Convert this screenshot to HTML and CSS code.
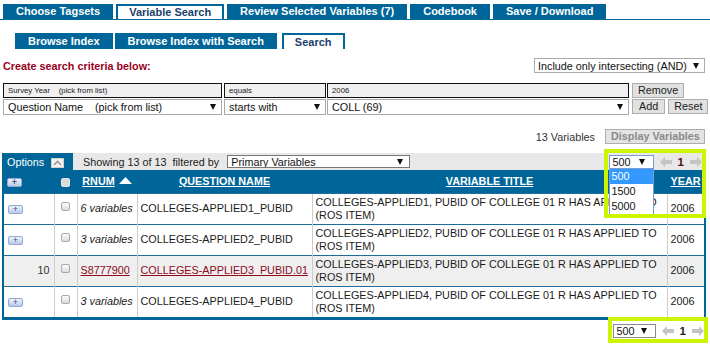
FILE: index.html
```html
<!DOCTYPE html>
<html>
<head>
<meta charset="utf-8">
<link rel="stylesheet" href="styles.css">
</head>
<body>
<div class="tabs">
  <div class="tab">Choose Tagsets</div>
  <div class="tab active">Variable Search</div>
  <div class="tab">Review Selected Variables (7)</div>
  <div class="tab">Codebook</div>
  <div class="tab">Save / Download</div>
</div>
<div class="subtabs">
  <div class="subtab">Browse Index</div>
  <div class="subtab">Browse Index with Search</div>
  <div class="subtab active">Search</div>
</div>
<div class="crit-head">
  <div class="crit-title">Create search criteria below:</div>
  <div class="sel combine"><span>Include only intersecting (AND)</span><span class="caret"></span></div>
</div>
<div class="criteria">
  <div class="fixed c1"><span>Survey Year    (pick from list)</span></div>
  <div class="fixed c2"><span>equals</span></div>
  <div class="fixed c3"><span>2006</span></div>
  <div class="btns"><div class="btn">Remove</div></div>
  <div class="sel c1"><span>Question Name    (pick from list)</span><span class="caret"></span></div>
  <div class="sel c2"><span>starts with</span><span class="caret"></span></div>
  <div class="sel c3"><span>COLL (69)</span><span class="caret"></span></div>
  <div class="btns"><div class="btn add">Add</div><div class="btn">Reset</div></div>
</div>
<div class="count-row">
  <span class="count">13 Variables</span>
  <div class="btn display">Display Variables</div>
</div>
<div class="results">
  <div class="toolbar">
    <div class="options">
      <span>Options</span>
      <span class="opt-btn"><svg width="9" height="6" viewBox="0 0 9 6"><polyline points="1,5 4.5,1.5 8,5" fill="none" stroke="#9a9a9a" stroke-width="1.6"/></svg></span>
    </div>
    <div class="filter">
      <span>Showing 13 of 13  filtered by</span>
      <div class="sel primary"><span>Primary Variables</span><span class="caret"></span></div>
    </div>
    <div class="pager top">
      <div class="sel page-sel focus"><span>500</span><span class="caret"></span></div>
      <svg class="arr" width="12" height="10" viewBox="0 0 12 10"><polygon points="0,5 5,0 5,3 12,3 12,7 5,7 5,10" fill="#c4c4c4"/></svg>
      <b class="pnum">1</b>
      <svg class="arr" width="12" height="10" viewBox="0 0 12 10"><polygon points="12,5 7,0 7,3 0,3 0,7 7,7 7,10" fill="#c4c4c4"/></svg>
      <div class="hl hl-top"></div>
      <ul class="dropdown">
        <li class="on">500</li>
        <li>1500</li>
        <li>5000</li>
      </ul>
    </div>
  </div>
  <table class="vars">
    <colgroup>
      <col class="w1"><col class="w2"><col class="w3"><col class="w4"><col class="w5"><col class="w6">
    </colgroup>
    <thead>
      <tr>
        <th class="first"><span class="exp">+</span></th>
        <th><span class="cb hd"></span></th>
        <th><span class="hlink">RNUM</span> <svg class="tri" width="13" height="7" viewBox="0 0 13 7"><polygon points="0,7 6.5,0 13,7" fill="#fff"/></svg></th>
        <th><span class="hlink">QUESTION NAME</span></th>
        <th><span class="hlink">VARIABLE TITLE</span></th>
        <th><span class="hlink">YEAR</span></th>
      </tr>
    </thead>
    <tbody>
      <tr>
        <td class="first"><span class="exp">+</span></td>
        <td class="ctr"><span class="cb"></span></td>
        <td class="muted">6 variables</td>
        <td>COLLEGES-APPLIED1_PUBID</td>
        <td>COLLEGES-APPLIED1, PUBID OF COLLEGE 01 R HAS APPLIED TO (ROS ITEM)</td>
        <td>2006</td>
      </tr>
      <tr>
        <td class="first"><span class="exp">+</span></td>
        <td class="ctr"><span class="cb"></span></td>
        <td class="muted">3 variables</td>
        <td>COLLEGES-APPLIED2_PUBID</td>
        <td>COLLEGES-APPLIED2, PUBID OF COLLEGE 01 R HAS APPLIED TO (ROS ITEM)</td>
        <td>2006</td>
      </tr>
      <tr class="grey">
        <td class="first num">10</td>
        <td class="ctr"><span class="cb"></span></td>
        <td><span class="link">S8777900</span></td>
        <td><span class="link">COLLEGES-APPLIED3_PUBID.01</span></td>
        <td>COLLEGES-APPLIED3, PUBID OF COLLEGE 01 R HAS APPLIED TO (ROS ITEM)</td>
        <td>2006</td>
      </tr>
      <tr>
        <td class="first"><span class="exp">+</span></td>
        <td class="ctr"><span class="cb"></span></td>
        <td class="muted">3 variables</td>
        <td>COLLEGES-APPLIED4_PUBID</td>
        <td>COLLEGES-APPLIED4, PUBID OF COLLEGE 01 R HAS APPLIED TO (ROS ITEM)</td>
        <td>2006</td>
      </tr>
    </tbody>
  </table>
</div>
<div class="bottom-row">
  <div class="pager bottom">
    <div class="sel page-sel"><span>500</span><span class="caret"></span></div>
    <svg class="arr" width="12" height="10" viewBox="0 0 12 10"><polygon points="0,5 5,0 5,3 12,3 12,7 5,7 5,10" fill="#c4c4c4"/></svg>
    <b class="pnum">1</b>
    <svg class="arr" width="12" height="10" viewBox="0 0 12 10"><polygon points="12,5 7,0 7,3 0,3 0,7 7,7 7,10" fill="#c4c4c4"/></svg>
    <div class="hl hl-bottom"></div>
  </div>
</div>
</body>
</html>
```

FILE: styles.css
```css
* { box-sizing: border-box; }
html, body { margin: 0; padding: 0; }
body {
  width: 710px;
  height: 347px;
  overflow: hidden;
  background: #fff;
  color: #222;
  font-family: "Liberation Sans", Arial, sans-serif;
  font-size: 10.8px;
}

/* main tabs */
.tabs {
  display: flex;
  padding: 4px 0 0 3px;
  border-bottom: 1px solid #006699;
}
.tab {
  height: 15px;
  line-height: 15px;
  padding: 0 13px;
  margin-right: 3px;
  background: #006699;
  color: #fff;
  font-weight: bold;
  font-size: 11px;
  white-space: nowrap;
}
.tab.active {
  background: #fff;
  color: #203f6c;
  border: 2px solid #006699;
  border-bottom: none;
  line-height: 13px;
  padding: 0 11px;
}

/* sub tabs */
.subtabs {
  display: flex;
  gap: 2px;
  margin: 13px 0 0 15px;
}
.subtab {
  height: 16px;
  line-height: 16px;
  padding: 0 13px;
  background: #006699;
  color: #fff;
  font-weight: bold;
  font-size: 11px;
  white-space: nowrap;
}
.subtab.active {
  margin-left: 3px;
  background: #fff;
  color: #203f6c;
  border: 2px solid #006699;
  border-bottom: none;
  line-height: 14px;
  padding: 0 11px;
}

/* selects */
.sel {
  display: flex;
  align-items: center;
  justify-content: space-between;
  height: 15px;
  padding: 0 5px 0 3px;
  border: 1px solid #a9a9a9;
  background: #fff;
  color: #111;
  font-size: 10.8px;
  white-space: pre;
  overflow: hidden;
}
.caret {
  flex: none;
  width: 0;
  height: 0;
  border-left: 3.5px solid transparent;
  border-right: 3.5px solid transparent;
  border-top: 6px solid #111;
}

/* criteria */
.crit-head {
  display: flex;
  align-items: center;
  justify-content: space-between;
  margin-top: 9px;
  padding: 0 5px 0 3px;
}
.crit-title {
  color: #990022;
  font-weight: bold;
  font-size: 10.8px;
}
.combine { width: 171px; }

.criteria {
  display: grid;
  grid-template-columns: 219px 103px 302px auto;
  column-gap: 1px;
  row-gap: 1px;
  margin-top: 10px;
  padding-left: 3px;
}
.fixed {
  display: flex;
  align-items: center;
  height: 15px;
  padding-left: 4px;
  background: #f0f0f0;
  border: 1px solid #111;
  font-size: 7.8px;
  color: #222;
  white-space: pre;
}
.criteria .sel { height: 16px; padding-left: 4px; }
.criteria .c2 { margin-left: 1px; }
.btns {
  display: flex;
  gap: 3px;
  padding-left: 2px;
}
.btn {
  height: 15px;
  line-height: 13px;
  padding: 0 5px;
  border: 1px solid #adadad;
  background: #e1e1e1;
  color: #222;
  font-size: 10.8px;
  white-space: nowrap;
}
.btn.add { padding: 0 6px; }

.count-row {
  display: flex;
  align-items: center;
  justify-content: flex-end;
  gap: 10px;
  margin-top: 14px;
  padding-right: 5px;
}
.count { color: #333; }
.btn.display {
  width: 100px;
  text-align: center;
  color: #8a8a8a;
  font-weight: bold;
  background: #e4e4e4;
}

/* results */
.results {
  margin: 9px 0 0 2px;
  width: 704px;
  border-left: 2px solid #006699;
  border-right: 2px solid #006699;
  border-bottom: 3px solid #006699;
}
.toolbar {
  display: flex;
  align-items: center;
  height: 17px;
  background: #e8e8e8;
}
.options {
  display: flex;
  align-items: center;
  gap: 7px;
  width: 69px;
  height: 17px;
  padding-left: 3px;
  background: #006699;
  color: #fff;
}
.opt-btn {
  display: flex;
  align-items: center;
  justify-content: center;
  width: 13px;
  height: 10px;
  margin-top: 3px;
  background: #f2f2f2;
  border: 1px solid #d0d0d0;
}
.filter {
  display: flex;
  align-items: center;
  gap: 8px;
  padding-left: 10px;
  white-space: pre;
  color: #222;
}
.primary {
  width: 183px;
  height: 13px;
  border-color: #777;
  padding-right: 6px;
}

.pager {
  position: relative;
  display: flex;
  align-items: center;
  gap: 6px;
}
.pager.top { margin-left: auto; margin-right: 2px; }
.page-sel {
  width: 45px;
  height: 14px;
  border-color: #8a8a8a;
  padding-right: 8px;
}
.page-sel.focus { border-color: #7a9cd3; }
.arr { display: block; }
.pnum { color: #222; font-size: 11.5px; }
.top .pnum { color: #4a1414; }
.hl {
  position: absolute;
  left: -5px;
  right: -4px;
  border: 4px solid #ccf500;
  pointer-events: none;
  z-index: 3;
}
.hl-top { top: -6px; height: 69px; }
.hl-bottom { top: -7px; height: 26px; }
.dropdown {
  position: absolute;
  left: 0;
  top: 14px;
  width: 45px;
  margin: 0;
  padding: 0;
  list-style: none;
  background: #fff;
  border: 1px solid #7a9cd3;
  border-top: none;
  z-index: 2;
}
.dropdown li {
  height: 15px;
  line-height: 15px;
  padding-left: 2px;
  color: #111;
}
.dropdown li.on { background: #3399ff; color: #fff; }

.vars {
  width: 700px;
  table-layout: fixed;
  border-collapse: collapse;
}
.w1 { width: 50px; }
.w2 { width: 23px; }
.w3 { width: 60px; }
.w4 { width: 175px; }
.w5 { width: 355px; }
.w6 { width: 37px; }
.vars th {
  height: 23px;
  padding: 0;
  background: #006699;
  color: #fff;
  font-weight: bold;
  font-size: 10.8px;
  text-align: center;
  white-space: nowrap;
}
.vars th.first { text-align: left; padding-left: 2px; }
.hlink { text-decoration: underline; }
.tri { vertical-align: 1px; margin-left: 1px; }
.vars td {
  height: 31px;
  padding: 0 3px;
  border-top: 1px solid #1f6c9c;
  border-left: 1px solid #cccccc;
  vertical-align: middle;
  line-height: 13px;
  color: #1a1a1a;
}
.vars td.first { border-left: none; }
.vars td.ctr { text-align: center; padding: 0; }
.vars td.num { text-align: right; padding-right: 4px; color: #333; }
.vars tr.grey td { background: #efefef; }
.muted { color: #959595; font-style: italic; white-space: nowrap; }
.link { color: #8e0a1a; text-decoration: underline; }

.exp {
  display: inline-block;
  width: 15px;
  height: 9px;
  margin-left: 1px;
  border: 1px solid #93a8d2;
  border-radius: 2px;
  background: linear-gradient(#eef2fb, #bac9ea);
  color: #44588a;
  font-size: 9px;
  line-height: 7px;
  text-align: center;
  vertical-align: middle;
}
.cb {
  display: inline-block;
  width: 9px;
  height: 9px;
  border: 1px solid #a9a9a9;
  border-radius: 2px;
  background: linear-gradient(#fbfbfb, #dcdcdc);
  vertical-align: 2px;
}
.cb.hd { background: #d9d9d9; border-color: #e6e6e6; vertical-align: middle; }

.bottom-row {
  display: flex;
  justify-content: flex-end;
  margin-top: 4px;
  padding-right: 6px;
}
.bottom-row .page-sel { width: 43px; }
```
